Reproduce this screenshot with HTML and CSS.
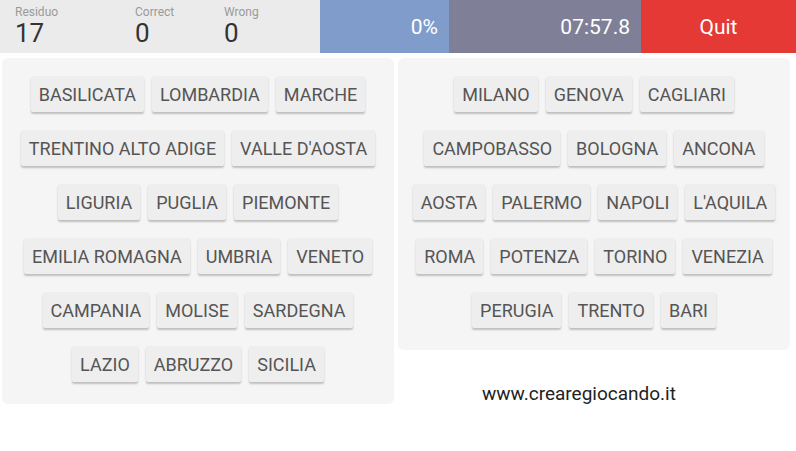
FILE: index.html
```html
<!DOCTYPE html>
<html lang="it">
<head>
    <meta charset="UTF-8">
    <meta name="viewport" content="width=device-width, initial-scale=1.0">
    <title>Regioni e capoluoghi</title>
    <link rel="stylesheet" href="styles.css">
</head>
<body>
    <header class="topbar">
        <div class="stats">
            <div class="stat stat-left">
                <span class="label">Residuo</span>
                <span class="value">17</span>
            </div>
            <div class="stat stat-correct">
                <span class="label">Correct</span>
                <span class="value">0</span>
            </div>
            <div class="stat">
                <span class="label">Wrong</span>
                <span class="value">0</span>
            </div>
        </div>
        <div class="progress">0%</div>
        <div class="timer">07:57.8</div>
        <button class="quit">Quit</button>
    </header>

    <main class="board">
        <div class="column">
            <section class="panel">
                <button class="tile">BASILICATA</button>
                <button class="tile">LOMBARDIA</button>
                <button class="tile">MARCHE</button>
                <button class="tile">TRENTINO ALTO ADIGE</button>
                <button class="tile">VALLE D'AOSTA</button>
                <button class="tile">LIGURIA</button>
                <button class="tile">PUGLIA</button>
                <button class="tile">PIEMONTE</button>
                <button class="tile">EMILIA ROMAGNA</button>
                <button class="tile">UMBRIA</button>
                <button class="tile">VENETO</button>
                <button class="tile">CAMPANIA</button>
                <button class="tile">MOLISE</button>
                <button class="tile">SARDEGNA</button>
                <button class="tile">LAZIO</button>
                <button class="tile">ABRUZZO</button>
                <button class="tile">SICILIA</button>
            </section>
        </div>
        <div class="column">
            <section class="panel">
                <button class="tile">MILANO</button>
                <button class="tile">GENOVA</button>
                <button class="tile">CAGLIARI</button>
                <button class="tile">CAMPOBASSO</button>
                <button class="tile">BOLOGNA</button>
                <button class="tile">ANCONA</button>
                <button class="tile">AOSTA</button>
                <button class="tile">PALERMO</button>
                <button class="tile">NAPOLI</button>
                <button class="tile">L'AQUILA</button>
                <button class="tile">ROMA</button>
                <button class="tile">POTENZA</button>
                <button class="tile">TORINO</button>
                <button class="tile">VENEZIA</button>
                <button class="tile">PERUGIA</button>
                <button class="tile">TRENTO</button>
                <button class="tile">BARI</button>
            </section>
            <p class="site">www.crearegiocando.it</p>
        </div>
    </main>
</body>
</html>
```

FILE: styles.css
```css
* {
    box-sizing: border-box;
}

body {
    margin: 0;
    background-color: #fff;
    font-family: Roboto, "Liberation Sans", Arial, sans-serif;
}

/* top bar */
.topbar {
    display: flex;
    height: 53px;
}

.stats {
    display: flex;
    width: 320px;
    padding-left: 15px;
    padding-top: 5px;
    background-color: #ebebeb;
}

.stat {
    display: flex;
    flex-direction: column;
}

.stat-left {
    width: 120px;
}

.stat-correct {
    width: 89px;
}

.label {
    font-size: 12px;
    line-height: 14px;
    color: #9a9a9a;
}

.value {
    font-size: 26px;
    line-height: 28px;
    color: #333;
}

.progress,
.timer,
.quit {
    display: flex;
    align-items: center;
    font-size: 21px;
    color: #fff;
}

.progress {
    width: 129px;
    justify-content: flex-end;
    padding-right: 11px;
    background-color: #7f9ccb;
}

.timer {
    width: 192px;
    justify-content: flex-end;
    padding-right: 11px;
    background-color: #7f7f98;
}

.quit {
    flex: 1;
    justify-content: center;
    border: none;
    font-family: inherit;
    background-color: #e53935;
}

/* board */
.board {
    display: flex;
    gap: 4px;
    padding: 5px 6px 0 2px;
}

.column {
    flex: 1 1 0;
    min-width: 0;
}

.panel {
    display: flex;
    flex-wrap: wrap;
    justify-content: center;
    align-content: flex-start;
    gap: 18px 8px;
    padding: 18px 10px 22px;
    border-radius: 6px;
    background-color: #f5f5f5;
}

.tile {
    height: 36px;
    padding: 0 8px;
    border: none;
    border-radius: 2px;
    font-family: inherit;
    font-size: 18px;
    color: #555;
    background-color: #eeeeee;
    box-shadow: 0 2px 2px rgba(0, 0, 0, 0.22);
}

.site {
    margin: 32px 30px 0 0;
    text-align: center;
    font-size: 19px;
    color: #222;
}
```
